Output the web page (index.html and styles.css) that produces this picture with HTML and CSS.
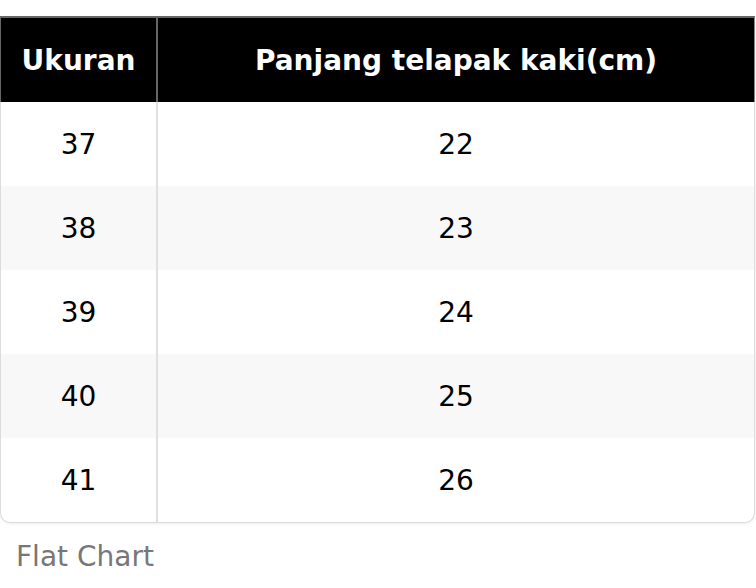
FILE: index.html
```html
<!DOCTYPE html>
<html lang="id">
<head>
<meta charset="utf-8">
<title>Flat Chart</title>
<link rel="stylesheet" href="styles.css">
</head>
<body>
<div class="page">
  <div class="chart">
    <div class="row head">
      <div class="cell first">Ukuran</div>
      <div class="cell">Panjang telapak kaki(cm)</div>
    </div>
    <div class="row">
      <div class="cell first">37</div>
      <div class="cell">22</div>
    </div>
    <div class="row alt">
      <div class="cell first">38</div>
      <div class="cell">23</div>
    </div>
    <div class="row">
      <div class="cell first">39</div>
      <div class="cell">24</div>
    </div>
    <div class="row alt">
      <div class="cell first">40</div>
      <div class="cell">25</div>
    </div>
    <div class="row">
      <div class="cell first">41</div>
      <div class="cell">26</div>
    </div>
  </div>
  <div class="caption">Flat Chart</div>
</div>
</body>
</html>
```
FILE: styles.css
```css
html, body {
  margin: 0;
  padding: 0;
  background: #fff;
}
body {
  font-family: "DejaVu Sans", sans-serif;
  font-size: 28px;
  color: #000;
}
.page {
  padding-top: 16px;
  width: 755px;
}
.chart {
  border: 1px solid #dcdcdc;
  border-top: 0;
  border-radius: 0 0 10px 10px;
  box-shadow: 0 1px 3px rgba(0, 0, 0, 0.08);
}
.row {
  display: grid;
  grid-template-columns: 157px 1fr;
  height: 84px;
}
.row.alt {
  background: #f8f8f8;
}
.row.head {
  height: 86px;
  background: #000;
  color: #fff;
  font-weight: bold;
  font-size: 28px;
  margin: 0 -1px;
  border-top: 2px solid #666;
  border-left: 1px solid #666;
  border-right: 1px solid #888;
  box-sizing: border-box;
}
.row.head .cell.first {
  border-right-color: #666;
}
.cell {
  display: flex;
  align-items: center;
  justify-content: center;
}
.cell.first {
  border-right: 2px solid #e0e0e0;
}
.caption {
  margin-top: 17px;
  padding-left: 16px;
  color: #777;
  font-size: 28px;
}
```
